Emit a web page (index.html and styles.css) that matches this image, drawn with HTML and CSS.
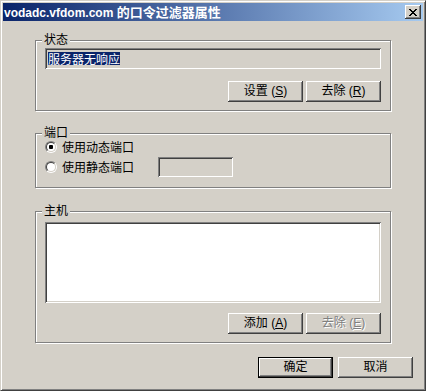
FILE: index.html
```html
<!DOCTYPE html>
<html lang="zh-CN">
<head>
<meta charset="utf-8">
<title>vodadc.vfdom.com 的口令过滤器属性</title>
<link rel="stylesheet" href="styles.css">
</head>
<body>
<div class="window">
  <div class="titlebar">
    <span class="title">vodadc.vfdom.com <span class="title-cjk">的口令过滤器属性</span></span>
    <button class="close" type="button" aria-label="关闭">
      <svg width="8" height="7" viewBox="0 0 8 7" shape-rendering="crispEdges"><path fill="#000" d="M0 0h2v1h-2z M6 0h2v1h-2z M1 1h2v1h-2z M5 1h2v1h-2z M2 2h4v1h-4z M3 3h2v1h-2z M2 4h4v1h-4z M1 5h2v1h-2z M5 5h2v1h-2z M0 6h2v1h-2z M6 6h2v1h-2z"/></svg>
    </button>
  </div>
  <div class="client">
    <div class="group g-status">
      <span class="legend">状态</span>
      <div class="field edit"><span class="sel">服务器无响应</span></div>
      <div class="btnrow">
        <button class="btn" type="button">设置 (<u>S</u>)</button>
        <button class="btn" type="button">去除 (<u>R</u>)</button>
      </div>
    </div>
    <div class="group g-port">
      <span class="legend">端口</span>
      <div class="row">
        <span class="radio checked"></span><span class="rlabel">使用动态端口</span>
      </div>
      <div class="row">
        <span class="radio"></span><span class="rlabel">使用静态端口</span>
        <div class="field portbox"></div>
      </div>
    </div>
    <div class="group g-host">
      <span class="legend">主机</span>
      <div class="field listbox"></div>
      <div class="btnrow">
        <button class="btn" type="button">添加 (<u>A</u>)</button>
        <button class="btn disabled" type="button">去除 (<u>E</u>)</button>
      </div>
    </div>
    <div class="footer">
      <button class="btn default" type="button">确定</button>
      <button class="btn" type="button">取消</button>
    </div>
  </div>
</div>
</body>
</html>
```
FILE: styles.css
```css
* { box-sizing: border-box; }
html, body { margin: 0; padding: 0; background: #d4d0c8; }
body {
  font-family: "Liberation Sans", "Noto Sans CJK SC", sans-serif;
  font-size: 12px;
  color: #000;
}
.window {
  width: 426px;
  height: 391px;
  background: #d4d0c8;
  border-style: solid;
  border-width: 1px;
  border-color: #d4d0c8 #404040 #404040 #d4d0c8;
  box-shadow: inset 1px 1px #fff, inset -1px -1px #808080;
  padding: 2px;
}
.titlebar {
  height: 18px;
  display: flex;
  align-items: center;
  background: linear-gradient(to right, #0a246a, #a6caf0);
}
.title {
  flex: 1;
  padding-left: 1px;
  color: #fff;
  font-weight: bold;
  font-size: 12px;
  line-height: 18px;
  padding-top: 1px;
  white-space: nowrap;
}
.title-cjk {
  font-family: "Noto Sans CJK SC", sans-serif;
  font-size: 13px;
}
.close {
  width: 16px;
  height: 14px;
  margin: 0 2px 0 0;
  padding: 0;
  border: none;
  background: #d4d0c8;
  box-shadow: inset -1px -1px #404040, inset 1px 1px #fff, inset -2px -2px #808080;
  display: flex;
  align-items: center;
  justify-content: center;
}
.close svg { display: block; margin-left: -1px; }
.client {
  padding: 19px 10px 0 32px;
}
.group {
  position: relative;
  width: 356px;
  border: 1px solid #808080;
  box-shadow: inset 1px 1px #fff, 1px 1px #fff;
}
.legend {
  position: absolute;
  left: 6px;
  top: -9px;
  padding: 0 2px;
  background: #d4d0c8;
  line-height: 14px;
  font-family: "Noto Sans CJK SC", sans-serif;
}
.field {
  box-shadow: inset 1px 1px #808080, inset -1px -1px #fff, inset 2px 2px #404040, inset -2px -2px #d4d0c8;
}
.g-status { height: 71px; padding: 7px 9px 0 9px; }
.edit {
  width: 336px;
  height: 21px;
  padding: 2px 3px;
  display: flex;
  align-items: center;
  background: #d4d0c8;
}
.sel {
  background: #0a246a;
  color: #fff;
  line-height: 13px;
  height: 13px;
  font-family: "Noto Sans CJK SC", sans-serif;
}
.btnrow {
  display: flex;
  justify-content: flex-end;
  gap: 3px;
  margin-top: 12px;
}
.btn {
  width: 75px;
  height: 21px;
  padding: 0;
  border: none;
  background: #d4d0c8;
  font-family: "Liberation Sans", "Noto Sans CJK SC", sans-serif;
  font-size: 12px;
  line-height: 13px;
  color: #000;
  box-shadow: inset -1px -1px #404040, inset 1px 1px #fff, inset -2px -2px #808080, inset 2px 2px #d4d0c8;
}
.btn u { text-underline-offset: 1px; }
.btn.disabled {
  color: #808080;
  text-shadow: 1px 1px 0 #fff;
}
.btn.default {
  border: 1px solid #000;
}
.g-port { margin-top: 22px; height: 55px; padding: 3px 9px 0 9px; }
.row {
  display: flex;
  align-items: center;
  height: 20px;
}
.radio {
  width: 12px;
  height: 12px;
  border-radius: 50%;
  border: 1px solid;
  border-color: #808080 #fff #fff #808080;
  display: flex;
  align-items: center;
  justify-content: center;
  flex: none;
}
.radio::before {
  content: "";
  width: 10px;
  height: 10px;
  border-radius: 50%;
  border: 1px solid;
  border-color: #404040 #d4d0c8 #d4d0c8 #404040;
  background: #fff;
  box-sizing: border-box;
}
.radio.checked::before {
  background: radial-gradient(circle, #000 0 2px, #fff 2.5px);
}
.rlabel {
  width: 96px;
  margin-left: 5px;
  line-height: 14px;
  font-family: "Noto Sans CJK SC", sans-serif;
}
.portbox {
  width: 75px;
  height: 20px;
  background: #d4d0c8;
}
.g-host { margin-top: 23px; height: 132px; padding: 10px 9px 0 9px; }
.listbox {
  width: 336px;
  height: 81px;
  background: #fff;
}
.g-host .btnrow { margin-top: 10px; }
.footer {
  display: flex;
  justify-content: flex-end;
  gap: 5px;
  margin-top: 14px;
}
```
